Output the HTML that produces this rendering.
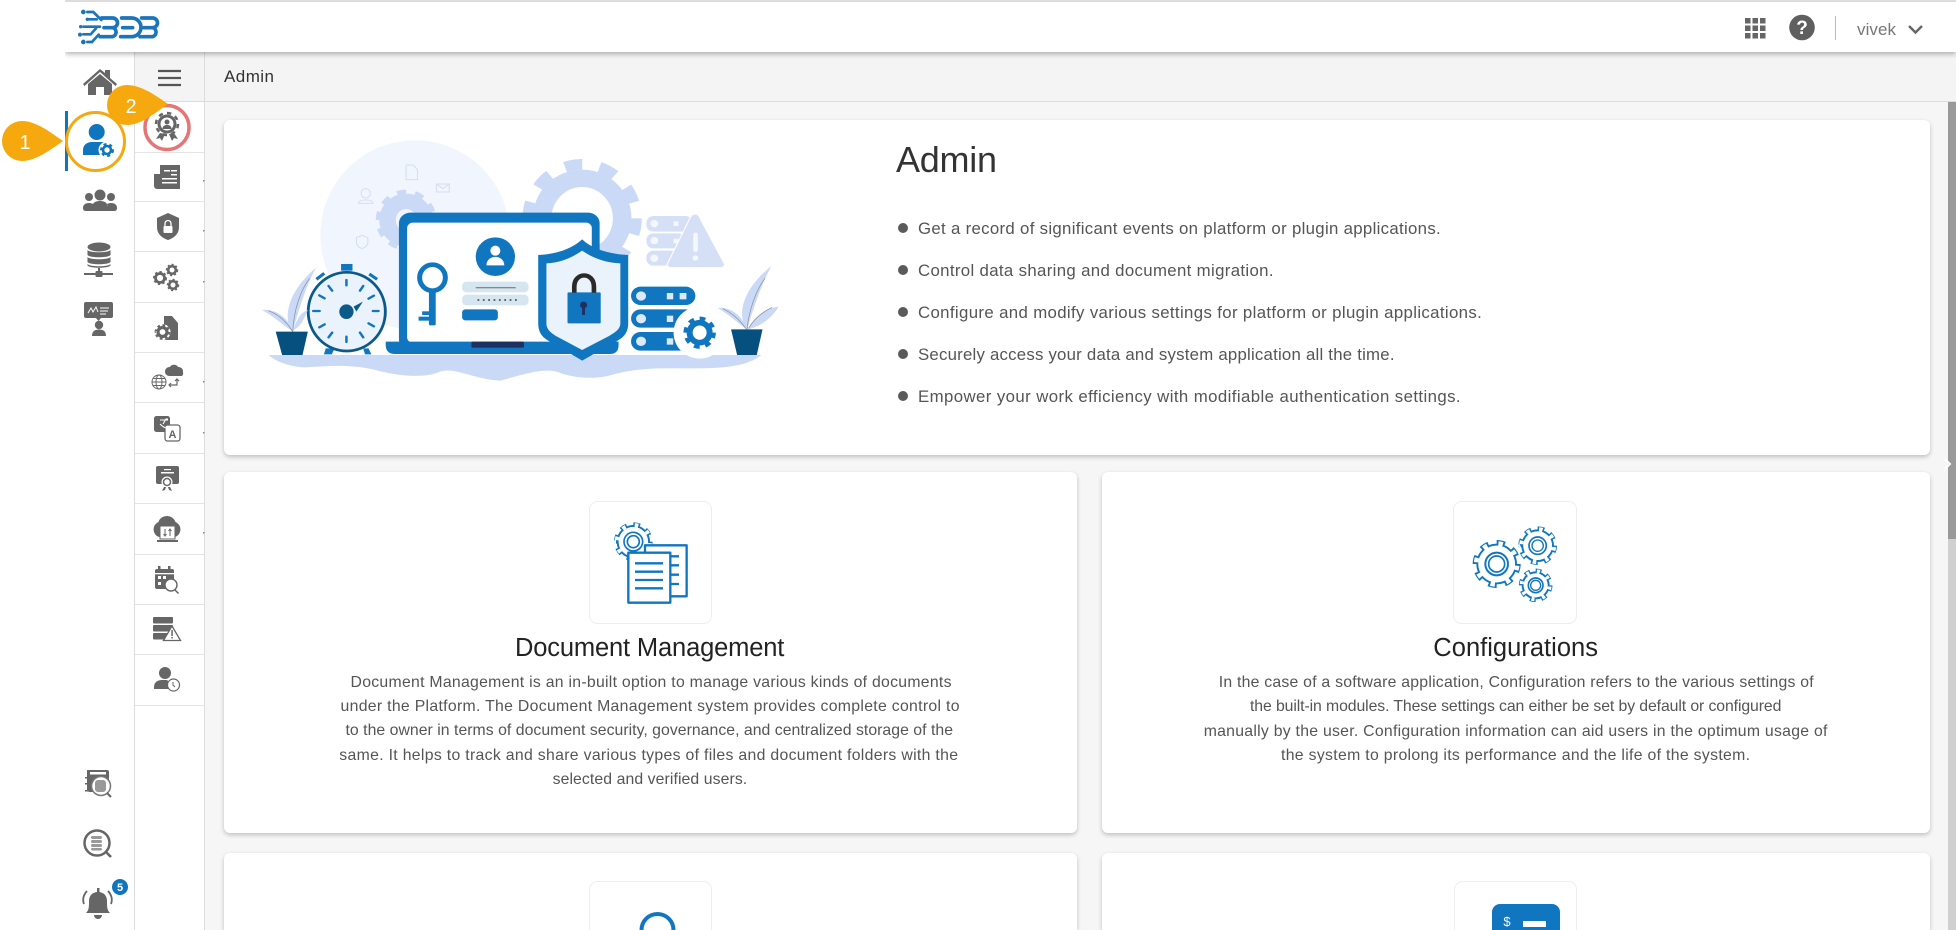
<!DOCTYPE html>
<html lang="en"><head><meta charset="utf-8"><title>Admin</title>
<style>
html,body{margin:0;padding:0;width:1956px;height:930px;overflow:hidden;background:#fff;font-family:"Liberation Sans",sans-serif}
#page{position:relative;width:1956px;height:930px;overflow:hidden;background:#fff}
.a{position:absolute}
.card{position:absolute;background:#fff;border-radius:6px;box-shadow:0 2px 5px rgba(0,0,0,.22)}
svg{position:absolute;left:0;top:0}
</style></head><body><div id="page">
<div class="a" style="left:204px;top:52px;width:1752px;height:878px;background:#f6f6f6"></div>
<div class="a" style="left:135px;top:52px;width:1821px;height:49px;background:#f4f4f4;border-bottom:1px solid #dcdcdc"></div>
<div class="a" style="left:134px;top:52px;width:1px;height:878px;background:#ddd"></div>
<div class="a" style="left:204px;top:52px;width:1px;height:878px;background:#ddd"></div>
<div class="card" style="left:224px;top:120px;width:1706px;height:335px"></div>
<div class="card" style="left:224px;top:472px;width:853px;height:361px"></div>
<div class="card" style="left:1102px;top:472px;width:828px;height:361px"></div>
<div class="card" style="left:224px;top:853px;width:853px;height:77px;border-radius:6px 6px 0 0"></div>
<div class="card" style="left:1102px;top:853px;width:828px;height:77px;border-radius:6px 6px 0 0"></div>
<div class="a" style="left:1948px;top:102px;width:8px;height:437px;background:#999"></div>
<div class="a" style="left:1948px;top:539px;width:8px;height:391px;background:#d0d0d0"></div>
<div class="a" style="left:65px;top:0;width:1891px;height:52px;background:#fff;border-top:2px solid #ddd;box-sizing:border-box;box-shadow:0 2px 5px rgba(0,0,0,.3);clip-path:inset(0 0 -10px 0)"></div>

<svg width="1956" height="930" viewBox="0 0 1956 930" xmlns="http://www.w3.org/2000/svg">
<!-- scroll chevron -->
<path d="M1945 459l5 5-5 5" fill="none" stroke="#fff" stroke-width="2"/>
<!-- logo -->
<g transform="scale(.3333)" fill="none" stroke="#1b75bb" stroke-width="11" stroke-linecap="round">
<path d="M305 54H338a14 14 0 0 1 0 29H312M338 83a14 14 0 0 1 0 27H300"/>
<path d="M365 54H395a27 27 0 0 1 0 56H362M368 83H398"/>
<path d="M425 54H458a14 14 0 0 1 0 29H432M458 83a14 14 0 0 1 0 27H420"/>
<path d="M262 36h18l24 24M262 58h28M250 80h50M250 103h22l16-18M262 126h14l20-22" stroke-width="8"/>
<g fill="#1b75bb" stroke="none"><circle cx="250" cy="36" r="7"/><circle cx="262" cy="58" r="5"/><circle cx="240" cy="104" r="6"/><circle cx="250" cy="126" r="7"/><circle cx="242" cy="80" r="5"/></g>
</g>
<!-- top right -->
<g fill="#666"><rect x="1745" y="18" width="5.5" height="5.5"/><rect x="1752.5" y="18" width="5.5" height="5.5"/><rect x="1760" y="18" width="5.5" height="5.5"/><rect x="1745" y="25.5" width="5.5" height="5.5"/><rect x="1752.5" y="25.5" width="5.5" height="5.5"/><rect x="1760" y="25.5" width="5.5" height="5.5"/><rect x="1745" y="33" width="5.5" height="5.5"/><rect x="1752.5" y="33" width="5.5" height="5.5"/><rect x="1760" y="33" width="5.5" height="5.5"/></g>
<circle cx="1802" cy="27.5" r="12.8" fill="#5f5f5f"/>
<text x="1802" y="34" font-size="19" font-weight="bold" fill="#fff" text-anchor="middle" font-family="Liberation Sans">?</text>
<rect x="1835" y="16" width="1" height="24" fill="#bbb"/>
<text x="1857" y="35" font-size="17" fill="#777" textLength="39" font-family="Liberation Sans">vivek</text>
<path d="M1909 26l6.5 6.5 6.5-6.5" fill="none" stroke="#666" stroke-width="2.4"/>
<!-- header -->
<text x="224" y="82" font-size="17" fill="#333" textLength="50" font-family="Liberation Sans">Admin</text>
<g stroke="#555" stroke-width="2.2"><path d="M158 71h23M158 78h23M158 85h23"/></g>
<!-- sidebar 2 rows -->
<g fill="#e4e4e4"><rect x="135" y="152" width="69" height="1"/><rect x="135" y="201" width="69" height="1"/><rect x="135" y="251" width="69" height="1"/><rect x="135" y="302" width="69" height="1"/><rect x="135" y="352" width="69" height="1"/><rect x="135" y="402" width="69" height="1"/><rect x="135" y="453" width="69" height="1"/><rect x="135" y="503" width="69" height="1"/><rect x="135" y="554" width="69" height="1"/><rect x="135" y="604" width="69" height="1"/><rect x="135" y="654" width="69" height="1"/><rect x="135" y="705" width="69" height="1"/></g>
<g fill="#888"><rect x="203" y="180" width="1.5" height="1.5"/><rect x="203" y="230" width="1.5" height="1.5"/><rect x="203" y="281" width="1.5" height="1.5"/><rect x="203" y="381" width="1.5" height="1.5"/><rect x="203" y="432" width="1.5" height="1.5"/><rect x="203" y="532" width="1.5" height="1.5"/></g>

<!-- sidebar 1 icons -->
<g fill="#666">
<path d="M83 84l17-15 5 4v-3h5v8l7 6-1.5 2L100 72 84.500 86z"/><path d="M88 84l12-10 12 10v11h-8v-8h-8v8h-8z"/>
<circle cx="100" cy="195" r="5.5"/><circle cx="89" cy="197" r="4"/><circle cx="111" cy="197" r="4"/>
<path d="M92 208c0-5 3-7 8-7s8 2 8 7zM83 208c0-3 2-5 6-5 2 0 3 .5 4 1l-1 4zM117 208c0-3-2-5-6-5-2 0-3 .5-4 1l1 4z"/><rect x="83" y="206" width="34" height="5" rx="2.500"/>
<ellipse cx="99" cy="247" rx="11.500" ry="4.500"/><path d="M87.500 250c2 3 21 3 23 0v5c-2 3-21 3-23 0zM87.500 257c2 3 21 3 23 0v5c-2 3-21 3-23 0zM87.500 264c2 3 21 3 23 0v1.500c-2 3-21 3-23 0z"/>
<rect x="98" y="268" width="2" height="5"/><rect x="84" y="273" width="29" height="2"/><rect x="95.500" y="271" width="7" height="6" rx="1"/>
<rect x="84" y="302" width="29" height="16" rx="2"/><path d="M96 318h5l-2.500 3z"/><circle cx="99" cy="325" r="4.200"/><path d="M92 336c0-5 3-6.500 7-6.500s7 1.500 7 6.500z"/>
</g>
<path d="M88 313l3-5 2 4 3-5 2 5M100 308h9M100 311h8M100 314h6" fill="none" stroke="#fff" stroke-width="1"/>
<!-- active -->
<rect x="65" y="111" width="3" height="60" fill="#0f75bc"/>
<g fill="#0f75bc"><circle cx="96.700" cy="132" r="8"/><path d="M83 155v-5c0-5 4-8 9-8h10c3 0 5 1 7 3v10z"/></g>
<circle cx="107" cy="150" r="8.500" fill="#fff"/>
<circle cx="107" cy="150" r="4" fill="none" stroke="#0f75bc" stroke-width="2.600"/>
<circle cx="107" cy="150" r="6" fill="none" stroke="#0f75bc" stroke-width="2" pathLength="12" stroke-dasharray="1 1"/>
<circle cx="95.500" cy="141.500" r="29" fill="none" stroke="#f5a90f" stroke-width="3"/>
<!-- teardrops -->
<path d="M63 141C50 150 36 161 22 161A20 20 0 0 1 22 121C36 121 50 132 63 141z" fill="#f5a90f"/>
<text x="25" y="149" font-size="20" fill="#fff" text-anchor="middle" font-family="Liberation Sans">1</text>
<circle cx="167" cy="127.500" r="22" fill="none" stroke="#e57676" stroke-width="3.500"/>
<path d="M168 104C155 113 141 125 127 125A20 20 0 0 1 127 85C141 85 155 95 168 104z" fill="#f5a90f"/>
<text x="131" y="113" font-size="20" fill="#fff" text-anchor="middle" font-family="Liberation Sans">2</text>
<!-- sidebar 2 icons -->
<g fill="#666">
<!-- award -->
<path d="M160 133l-4 6 4-1 2 3 3-7zM174 133l4 6-4-1-2 3-3-7z"/>
<circle cx="167" cy="124" r="9.500"/><circle cx="167" cy="124" r="11" fill="none" stroke="#666" stroke-width="2.500" pathLength="16" stroke-dasharray="1 1"/>
<circle cx="167" cy="124" r="6.500" fill="#fff"/><circle cx="167" cy="122" r="2.500"/><path d="M162.500 129c0-3 2-4 4.500-4s4.500 1 4.500 4z"/>
<!-- newsletter -->
<path d="M160 165h20v24h-23a3 3 0 0 1-3-3v-12h6z"/>
<!-- shield -->
<path d="M168 213l11 5v9c0 7-5 11-11 13-6-2-11-6-11-13v-9z"/>
<!-- gears -->
<circle cx="160" cy="278" r="4.500" fill="none" stroke="#666" stroke-width="2.800"/><circle cx="160" cy="278" r="6" fill="none" stroke="#666" stroke-width="2" pathLength="16" stroke-dasharray="1 1"/>
<circle cx="172" cy="270" r="3.800" fill="none" stroke="#666" stroke-width="2.600"/><circle cx="172" cy="270" r="5.200" fill="none" stroke="#666" stroke-width="2" pathLength="16" stroke-dasharray="1 1"/>
<circle cx="173" cy="285" r="3.800" fill="none" stroke="#666" stroke-width="2.600"/><circle cx="173" cy="285" r="5.200" fill="none" stroke="#666" stroke-width="2" pathLength="16" stroke-dasharray="1 1"/>
<!-- doc gear -->
<path d="M164 316h8l6 7v17h-14z"/>
<circle cx="162.500" cy="332" r="8" fill="#fff"/><circle cx="162.500" cy="332" r="4.500" fill="none" stroke="#666" stroke-width="3.200"/><circle cx="162.500" cy="332" r="6.800" fill="none" stroke="#666" stroke-width="2.200" pathLength="16" stroke-dasharray="1 1"/>
<!-- cloud globe -->
<path d="M169 376a4.500 4.500 0 0 1 1-9c1-3 7-3 8 0a4.500 4.500 0 0 1 5 5 4 4 0 0 1-1 4z"/>
<path d="M170 385h7v-6M175 381l2-2 2 2M174 385h-5M171 383l-2 2 2 2" fill="none" stroke="#666" stroke-width="1.200"/>
<!-- translate -->
<rect x="154" y="416" width="16" height="16" rx="2.500"/>
<rect x="165" y="425" width="15" height="16" rx="2.500" fill="#fff" stroke="#666" stroke-width="1.300"/>
<!-- cert -->
<rect x="156" y="466" width="23" height="18" rx="2"/>
<circle cx="167" cy="482" r="5.500" fill="#fff"/><circle cx="167" cy="482" r="3.500" fill="none" stroke="#666" stroke-width="1.500"/><path d="M164 487l-2 4 3-1 1-3zM170 487l2 4-3-1-1-3z"/><rect x="161" y="472" width="13" height="1.500" fill="#fff"/><rect x="164" y="469" width="7" height="1.200" fill="#fff"/>
<!-- cloud laptop -->
<path d="M159 537a8 8 0 0 1-.5-15c1-4 5-6 8.500-6s7 2 8.500 6a8 8 0 0 1-.5 15z"/>
<rect x="160" y="526" width="15" height="13" fill="#fff" stroke="#666"/><rect x="157" y="540" width="21" height="2"/>
<path d="M165 529v7M163.500 534l1.500 2 1.500-2M170 536v-7M168.500 531l1.500-2 1.500 2" stroke="#666" fill="none"/>
<!-- calendar -->
<rect x="155" y="569" width="19" height="20" rx="2"/><rect x="158" y="566" width="2.500" height="5"/><rect x="168" y="566" width="2.500" height="5"/>
<rect x="155" y="573" width="19" height="1.300" fill="#fff"/><rect x="158" y="576" width="3" height="3" fill="#fff"/><rect x="163" y="576" width="3" height="3" fill="#fff"/><rect x="158" y="582" width="3" height="3" fill="#fff"/>
<circle cx="171" cy="585" r="6" fill="#fff" stroke="#666" stroke-width="1.400"/><path d="M175 590l3.500 3.500" stroke="#666" stroke-width="1.500"/>
<!-- server alert -->
<rect x="153" y="617" width="20" height="6.500" rx="1"/><rect x="153" y="625" width="20" height="6.500" rx="1"/><rect x="153" y="633" width="20" height="6.500" rx="1"/>
<path d="M172 626l8.500 14.500h-17z" fill="#fff" stroke="#666" stroke-width="1.300"/><rect x="171.300" y="630" width="1.500" height="6"/><rect x="171.300" y="637" width="1.500" height="1.500"/>
<!-- user clock -->
<circle cx="165" cy="673" r="6"/><path d="M154 689v-2c0-5 4-7 8-7h5l3 3v6z"/>
<circle cx="173.500" cy="685" r="6" fill="#fff" stroke="#666" stroke-width="1.200"/><path d="M173 682v3l2 2" fill="none" stroke="#666"/>
<!-- bottom sidebar 1 -->
<path d="M87 770h20a2 2 0 0 1 2 2v20H89l-2-2z"/><rect x="85" y="777" width="4" height="1.500"/><rect x="85" y="783" width="4" height="1.500"/><rect x="85" y="790" width="4" height="1.500"/>
<rect x="90" y="772" width="16" height="2.500" fill="#fff"/>
<circle cx="101" cy="786" r="9.500" fill="#fff" stroke="#777" stroke-width="1.500"/><rect x="95" y="780" width="11" height="12" rx="3" fill="#999"/><path d="M107 793l4 4" stroke="#666" stroke-width="2"/>
<circle cx="97" cy="843" r="12.500" fill="#fff" stroke="#666" stroke-width="2.500"/><rect x="91" y="836" width="11" height="3" rx="1.500" fill="#999"/><rect x="91" y="840" width="11" height="3" rx="1.500" fill="#999"/><rect x="91" y="844" width="11" height="3" rx="1.500" fill="#999"/><rect x="91" y="848" width="11" height="2.500" rx="1.200" fill="#999"/>
<path d="M106 852l5 5" stroke="#666" stroke-width="2.600"/>
<path d="M86 913c3-3 3-6 3-12 0-5 3-9 9-9s9 4 9 9c0 6 0 9 3 12z"/><path d="M94 915h8a4 4 0 0 1-8 0z"/><rect x="97" y="888" width="2.500" height="5"/>
</g>
<path d="M84 904c-2-5 0-10 3-13M111 904c2-5 0-10-3-13" fill="none" stroke="#666" stroke-width="1.800"/>
<circle cx="120" cy="887" r="8" fill="#0f75bc"/>
<text x="120" y="891" font-size="11" font-weight="bold" fill="#fff" text-anchor="middle" font-family="Liberation Sans">5</text>
<g fill="#fff">
<rect x="164" y="170" width="6" height="1.500"/><rect x="171" y="170" width="6" height="1.500"/><rect x="171" y="174" width="6" height="1.500"/><rect x="162" y="178" width="15" height="1.500"/><rect x="162" y="182" width="15" height="1.500"/>
<rect x="163.500" y="226" width="9" height="7" rx="1"/>
<path d="M163 424l3-5h2M160 420h8M160 424c3 3 5 4 7 4" fill="none" stroke="#fff" stroke-width="1.100"/>
</g>
<path d="M165 226v-2.500a3 3 0 0 1 6 0V226" fill="none" stroke="#fff" stroke-width="1.300"/>
<text x="172.500" y="438" font-size="11" font-weight="bold" fill="#666" text-anchor="middle" font-family="Liberation Sans">A</text>
<g fill="none" stroke="#666" stroke-width="1"><circle cx="159" cy="382" r="7"/><ellipse cx="159" cy="382" rx="3" ry="7"/><path d="M152 382h14M153 378.500h12M153 385.500h12"/></g>

<!-- hero illustration: zoom coords x/2.8, y/3 -->
<g transform="translate(240 110) scale(.35714 .33333)">
<ellipse cx="490" cy="375" rx="265" ry="284" fill="#f0f5fe"/>
<ellipse cx="958" cy="325" rx="112" ry="120" fill="none" stroke="#c9d9f6" stroke-width="52"/>
<ellipse cx="958" cy="325" rx="151" ry="162" fill="none" stroke="#c9d9f6" stroke-width="32" pathLength="20" stroke-dasharray="1 1"/>
<ellipse cx="465" cy="330" rx="52" ry="56" fill="none" stroke="#c9d9f6" stroke-width="46"/>
<ellipse cx="465" cy="330" rx="76" ry="82" fill="none" stroke="#c9d9f6" stroke-width="18" pathLength="20" stroke-dasharray="1 1"/>
<path d="M80 735H1460C1420 770 1350 775 1270 775 1200 775 1120 770 1040 795 1000 808 940 805 900 790 860 770 800 790 730 812 660 810 600 770 560 785 520 805 450 800 380 780 300 760 240 770 180 772 140 770 100 755 80 735z" fill="#c9d9f6"/>
<!-- faint icons -->
<g fill="none" stroke="#d5dff2" stroke-width="3"><ellipse cx="352" cy="250" rx="13" ry="14"/><path d="M332 280c0-14 40-14 40 0z"/><path d="M465 165h20l12 14v30h-32z"/><rect x="550" y="222" width="36" height="24"/><path d="M550 222l18 14 18-14"/><path d="M342 376l16 7v14c0 9-8 16-16 19-8-3-16-10-16-19v-14z"/></g>
<!-- laptop -->
<rect x="445" y="308" width="562" height="412" rx="32" fill="#1176c0"/>
<rect x="468" y="338" width="517" height="360" rx="16" fill="#fff"/>
<path d="M408 695H1060V705Q1060 732 1035 732H435Q408 732 408 705z" fill="#1176c0"/>
<rect x="648" y="695" width="147" height="18" rx="4" fill="#1f2f60"/>
<ellipse cx="715" cy="440" rx="55" ry="58" fill="#1176c0"/>
<ellipse cx="715" cy="422" rx="14" ry="15" fill="#fff"/><path d="M690 466c0-34 50-34 50 0z" fill="#fff"/>
<ellipse cx="539" cy="503" rx="36" ry="39" fill="#fff" stroke="#1176c0" stroke-width="14"/>
<rect x="529" y="540" width="19" height="106" rx="4" fill="#1176c0"/><rect x="510" y="604" width="20" height="11" fill="#1176c0"/><rect x="500" y="620" width="30" height="12" fill="#1176c0"/>
<rect x="622" y="515" width="186" height="32" rx="12" fill="#d6e6f0"/><rect x="660" y="531" width="112" height="4" fill="#888"/>
<rect x="622" y="554" width="186" height="32" rx="12" fill="#d6e6f0"/><path d="M665 570H775" stroke="#666" stroke-width="6" stroke-dasharray="5 10"/>
<rect x="622" y="598" width="100" height="33" rx="9" fill="#1176c0"/>
<!-- shield -->
<path d="M958 388C985 415 1030 432 1087 435V640C1087 680 1060 690 1040 702L958 752 880 702C860 690 835 680 835 640V435C890 432 930 415 958 388z" fill="#1176c0"/>
<path d="M958 422C985 442 1020 458 1065 460V640C1065 660 1045 670 1030 680L958 720 888 680C873 670 858 660 858 640V460C900 458 930 442 958 422z" fill="#eaf2fb"/>
<rect x="917" y="547" width="93" height="93" rx="3" fill="#1176c0"/>
<path d="M936 548V530C936 485 991 485 991 530V548" fill="none" stroke="#2a2a2a" stroke-width="13"/>
<ellipse cx="962" cy="585" rx="10" ry="10" fill="#1f2f60"/><rect x="958" y="588" width="8" height="27" fill="#1f2f60"/>
<!-- pale servers -->
<rect x="1138" y="318" width="130" height="47" rx="20" fill="#d5e0f6"/><rect x="1138" y="370" width="110" height="45" rx="20" fill="#d5e0f6"/><rect x="1138" y="422" width="90" height="45" rx="20" fill="#d5e0f6"/>
<g fill="#f4f7fe"><circle cx="1160" cy="341" r="11"/><circle cx="1160" cy="392" r="11"/><circle cx="1160" cy="445" r="11"/><rect x="1214" y="334" width="14" height="14"/><rect x="1214" y="386" width="14" height="14"/></g>
<path d="M1275 312C1285 312 1288 325 1293 335L1358 465 1350 473H1202L1195 465 1255 335C1260 322 1265 312 1275 312z" fill="#d5e0f6" stroke="#fff" stroke-width="3"/>
<rect x="1269" y="368" width="13" height="58" rx="6" fill="#f4f7fe"/><circle cx="1275" cy="444" r="8" fill="#f4f7fe"/>
<!-- servers -->
<rect x="1095" y="530" width="180" height="55" rx="27" fill="#1176c0"/><rect x="1095" y="598" width="180" height="55" rx="27" fill="#1176c0"/><rect x="1095" y="666" width="180" height="56" rx="27" fill="#1176c0"/>
<g fill="#dde9f8"><circle cx="1123" cy="558" r="14"/><circle cx="1123" cy="626" r="14"/><circle cx="1123" cy="694" r="14"/><rect x="1195" y="549" width="18" height="19"/><rect x="1231" y="549" width="19" height="19"/><rect x="1195" y="617" width="18" height="19"/><rect x="1195" y="685" width="18" height="19"/></g>
<ellipse cx="1287" cy="668" rx="73" ry="78" fill="#fff"/>
<ellipse cx="1287" cy="668" rx="28" ry="30" fill="none" stroke="#1176c0" stroke-width="17"/>
<ellipse cx="1287" cy="668" rx="40" ry="43" fill="none" stroke="#1176c0" stroke-width="11" pathLength="16" stroke-dasharray="1 1"/>
<!-- clock -->
<rect x="283" y="462" width="32" height="20" fill="#1176c0"/>
<path d="M214 508l22-18M362 492l22 16" stroke="#1176c0" stroke-width="9"/>
<path d="M240 715l-5 18h22l8-18zM345 715l5 18h18l-8-18z" fill="#1176c0"/>
<ellipse cx="299" cy="605" rx="108" ry="118" fill="#eaf2fb" stroke="#0b5a8a" stroke-width="8"/>
<g stroke="#1176c0" stroke-width="7" stroke-linecap="round"><path d="M298 510v16M298 680v16M205 603h18M372 603h16M222 556l15 9M360 640l15 9M222 652l15-9M360 566l15-9M248 528l10 14M345 528l-9 14M248 682l10-14M345 682l-9-14"/></g>
<path d="M318 590l26-15-18 30z" fill="#0b5a8a"/><ellipse cx="298" cy="605" rx="20" ry="22" fill="#0b5a8a"/>
<!-- plants -->
<path d="M148 665c-25-30-25-110 65-192-20 40-40 90-65 192z" fill="#c9d9f6"/>
<path d="M148 665C115 640 95 620 62 600c30-5 75 20 86 65zM150 660c10-40 25-55 40-60-10 25-20 50-40 60z" fill="#c9d9f6"/>
<path d="M148 665C150 600 170 540 195 505M148 665C130 635 110 615 80 602" fill="none" stroke="#8a8f9c" stroke-width="2"/>
<path d="M100 665H190L175 735H118z" fill="#05507f"/>
<path d="M1420 658c-25-30-25-110 68-190-20 40-40 90-68 190z" fill="#c9d9f6"/>
<path d="M1418 658C1390 635 1370 615 1338 594c30-5 70 20 80 64zM1422 658C1440 620 1470 595 1508 590c-15 30-50 60-86 68z" fill="#c9d9f6"/>
<path d="M1420 658C1425 600 1445 540 1470 505M1418 658C1400 630 1380 610 1352 596M1424 655C1440 625 1465 605 1490 592" fill="none" stroke="#8a8f9c" stroke-width="2"/>
<path d="M1375 658H1463L1447 735H1392z" fill="#05507f"/>
</g>

<!-- hero text -->
<g font-family="Liberation Sans">
<text x="896" y="172" font-size="36" fill="#333" textLength="101">Admin</text>
<g font-size="16.800" fill="#555">
<circle cx="903" cy="228" r="5" fill="#5a5a5a"/><text x="918" y="234" textLength="522.700">Get a record of significant events on platform or plugin applications.</text>
<circle cx="903" cy="270" r="5" fill="#5a5a5a"/><text x="918" y="276" textLength="355.500">Control data sharing and document migration.</text>
<circle cx="903" cy="312" r="5" fill="#5a5a5a"/><text x="918" y="318" textLength="563.800">Configure and modify various settings for platform or plugin applications.</text>
<circle cx="903" cy="354" r="5" fill="#5a5a5a"/><text x="918" y="360" textLength="476.500">Securely access your data and system application all the time.</text>
<circle cx="903" cy="396" r="5" fill="#5a5a5a"/><text x="918" y="402" textLength="542.600">Empower your work efficiency with modifiable authentication settings.</text>
</g>
<!-- card text -->
<text x="515" y="656" font-size="25.500" fill="#222" textLength="269.400">Document Management</text>
<g font-size="15.800" fill="#555">
<text x="350.500" y="687" textLength="601">Document Management is an in-built option to manage various kinds of documents</text>
<text x="340.500" y="711" textLength="619">under the Platform. The Document Management system provides complete control to</text>
<text x="345.500" y="735" textLength="607.500">to the owner in terms of document security, governance, and centralized storage of the</text>
<text x="339.300" y="760" textLength="618.700">same. It helps to track and share various types of files and document folders with the</text>
<text x="552.600" y="784" textLength="194.600">selected and verified users.</text>
</g>
<text x="1433.300" y="656" font-size="25.500" fill="#222" textLength="164.700">Configurations</text>
<g font-size="15.800" fill="#555">
<text x="1218.700" y="687" textLength="595">In the case of a software application, Configuration refers to the various settings of</text>
<text x="1250" y="711" textLength="531.400">the built-in modules. These settings can either be set by default or configured</text>
<text x="1203.700" y="736" textLength="623.700">manually by the user. Configuration information can aid users in the optimum usage of</text>
<text x="1281" y="760" textLength="469">the system to prolong its performance and the life of the system.</text>
</g>
</g>

<!-- icon boxes -->
<g fill="#fff" stroke="#eeeeee"><rect x="589.500" y="501.500" width="122" height="122" rx="8"/><rect x="1453.500" y="501.500" width="123" height="122" rx="8"/>
<path d="M589.500 930V889.500a8 8 0 0 1 8-8h106a8 8 0 0 1 8 8V930"/><path d="M1454.500 930V889.500a8 8 0 0 1 8-8h106a8 8 0 0 1 8 8V930"/></g>
<!-- doc icon -->
<g transform="translate(560 480) scale(.3333)">
<g fill="none" stroke="#1176c0">
<circle cx="220" cy="185" r="47" stroke-width="6"/>
<circle cx="220" cy="185" r="52" stroke-width="12" pathLength="16" stroke-dasharray="1 1"/>
</g>
<circle cx="220" cy="185" r="44" fill="#fff"/>
<circle cx="220" cy="185" r="50" fill="none" stroke="#fff" stroke-width="12" pathLength="16" stroke-dasharray=".55 1.45" stroke-dashoffset="-.225"/>
<circle cx="220" cy="185" r="28" fill="none" stroke="#1176c0" stroke-width="5"/><circle cx="220" cy="185" r="18" fill="none" stroke="#1176c0" stroke-width="5"/>
<rect x="255" y="196" width="125" height="153" fill="#fff" stroke="#1176c0" stroke-width="7" stroke-linejoin="round"/>
<path d="M330 229h27M330 256h27M330 284h27M330 312h27" stroke="#1176c0" stroke-width="7"/>
<rect x="205" y="218" width="126" height="150" fill="#fff" stroke="#1176c0" stroke-width="7" stroke-linejoin="round"/>
<path d="M225 250h84M225 275h84M225 300h84M225 325h84" stroke="#1176c0" stroke-width="7"/>
</g>
<!-- config icon -->
<g transform="translate(1430 480) scale(.3333)" fill="none" stroke="#1176c0">
<circle cx="200" cy="252" r="58" stroke-width="6"/><circle cx="200" cy="252" r="65" stroke-width="14" pathLength="16" stroke-dasharray="1 1"/>
<circle cx="200" cy="252" r="55" fill="#fff" stroke="none"/><circle cx="200" cy="252" r="61" stroke="#fff" stroke-width="15" pathLength="16" stroke-dasharray=".55 1.45" stroke-dashoffset="-.225"/>
<circle cx="200" cy="252" r="34" stroke-width="6"/><circle cx="200" cy="252" r="24" stroke-width="5"/>
<circle cx="323" cy="197" r="46" stroke-width="6"/><circle cx="323" cy="197" r="52" stroke-width="12" pathLength="16" stroke-dasharray="1 1"/>
<circle cx="323" cy="197" r="43" fill="#fff" stroke="none"/><circle cx="323" cy="197" r="49" stroke="#fff" stroke-width="13" pathLength="16" stroke-dasharray=".55 1.45" stroke-dashoffset="-.225"/>
<circle cx="323" cy="197" r="26" stroke-width="5"/><circle cx="323" cy="197" r="17" stroke-width="4"/>
<circle cx="317" cy="316" r="39" stroke-width="6"/><circle cx="317" cy="316" r="45" stroke-width="11" pathLength="16" stroke-dasharray="1 1"/>
<circle cx="317" cy="316" r="36" fill="#fff" stroke="none"/><circle cx="317" cy="316" r="42" stroke="#fff" stroke-width="12" pathLength="16" stroke-dasharray=".55 1.45" stroke-dashoffset="-.225"/>
<circle cx="317" cy="316" r="22" stroke-width="5"/><circle cx="317" cy="316" r="15" stroke-width="4"/>
</g>
<!-- third row partial icons -->
<path d="M641.500 930a16 16 0 0 1 32 0" fill="#fff" stroke="#1176c0" stroke-width="4"/>
<path d="M1492 912a8 8 0 0 1 8-8h52a8 8 0 0 1 8 8v18h-68z" fill="#1176c0"/>
<rect x="1523" y="921" width="23" height="6" fill="#fff"/>
<text x="1507" y="926" font-size="13" fill="#fff" text-anchor="middle" font-family="Liberation Sans">$</text>
</svg>
</div></body></html>
